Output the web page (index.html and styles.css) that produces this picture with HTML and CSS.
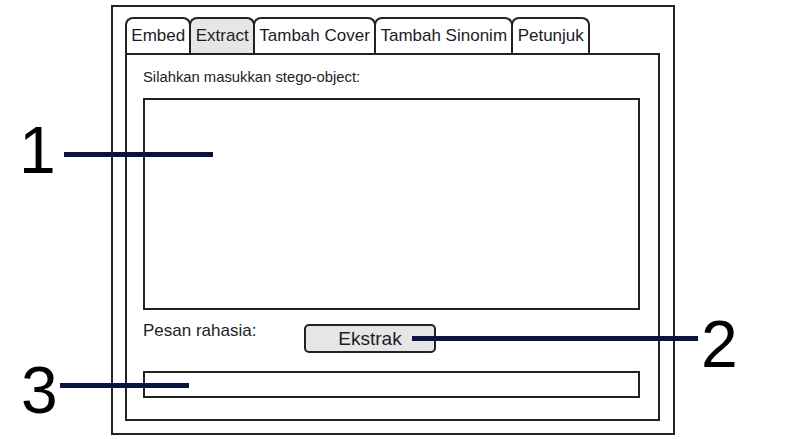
FILE: index.html
```html
<!DOCTYPE html>
<html lang="id">
<head>
<meta charset="utf-8">
<title>Extract</title>
<link rel="stylesheet" href="styles.css">
</head>
<body>
<div class="frame">
  <div class="tabs">
    <div class="tab">Embed</div>
    <div class="tab active">Extract</div>
    <div class="tab">Tambah Cover</div>
    <div class="tab">Tambah Sinonim</div>
    <div class="tab">Petunjuk</div>
  </div>
  <div class="panel">
    <div class="label">Silahkan masukkan stego-object:</div>
    <div class="textarea"></div>
    <div class="row">
      <div class="row-label">Pesan rahasia:</div>
      <div class="button">Ekstrak</div>
    </div>
    <div class="output"></div>
  </div>
</div>

<div class="callout num1">1</div>
<div class="callout-line line1"></div>
<div class="callout num2">2</div>
<div class="callout-line line2"></div>
<div class="callout num3">3</div>
<div class="callout-line line3"></div>
</body>
</html>
```
FILE: styles.css
```css
html, body {
  margin: 0;
  padding: 0;
  background: #ffffff;
}

body {
  position: relative;
  width: 785px;
  height: 439px;
  overflow: hidden;
  font-family: "Liberation Sans", Arial, sans-serif;
  color: #1c1c26;
}

.frame {
  box-sizing: border-box;
  width: 564px;
  height: 430px;
  margin: 5px 0 0 111px;
  border: 2px solid #222;
  padding: 10px 13px 12px 12px;
  display: flex;
  flex-direction: column;
}

.tabs {
  display: flex;
  height: 36px;
}

.tab {
  border: 2px solid #222;
  border-bottom: none;
  border-radius: 8px 8px 0 0;
  padding: 0 4.3px;
  font-size: 17px;
  line-height: 34px;
  background: #fff;
  white-space: nowrap;
}

.tab + .tab {
  margin-left: -2px;
}

.tab.active {
  background: #e6e6e6;
}

.panel {
  flex: 1;
  border: 2px solid #222;
  padding: 14px 18px 21px 16px;
  display: flex;
  flex-direction: column;
}

.label {
  font-size: 14.8px;
  line-height: 17px;
}

.textarea {
  margin-top: 12px;
  height: 208px;
  border: 2px solid #222;
}

.row {
  margin-top: 11px;
  display: flex;
  align-items: flex-start;
}

.row-label {
  width: 161px;
  flex-shrink: 0;
  font-size: 17px;
  line-height: 20px;
}

.button {
  margin-top: 3px;
  box-sizing: border-box;
  width: 132px;
  height: 29px;
  border: 2px solid #222;
  border-radius: 5px;
  background: #e6e6e6;
  text-align: center;
  font-size: 19px;
  line-height: 25px;
}

.output {
  margin-top: 18px;
  height: 23px;
  border: 2px solid #222;
}

.callout {
  position: absolute;
  font-size: 66px;
  line-height: 66px;
  color: #000;
}

.num1 { left: 19px; top: 117px; }
.num2 { left: 701px; top: 311px; }
.num3 { left: 21px; top: 357px; }

.callout-line {
  position: absolute;
  height: 5px;
  background: #0a1440;
}

.line1 { left: 64px; top: 152px; width: 149px; }
.line2 { left: 412px; top: 336px; width: 286px; }
.line3 { left: 60px; top: 383px; width: 129px; }
```
